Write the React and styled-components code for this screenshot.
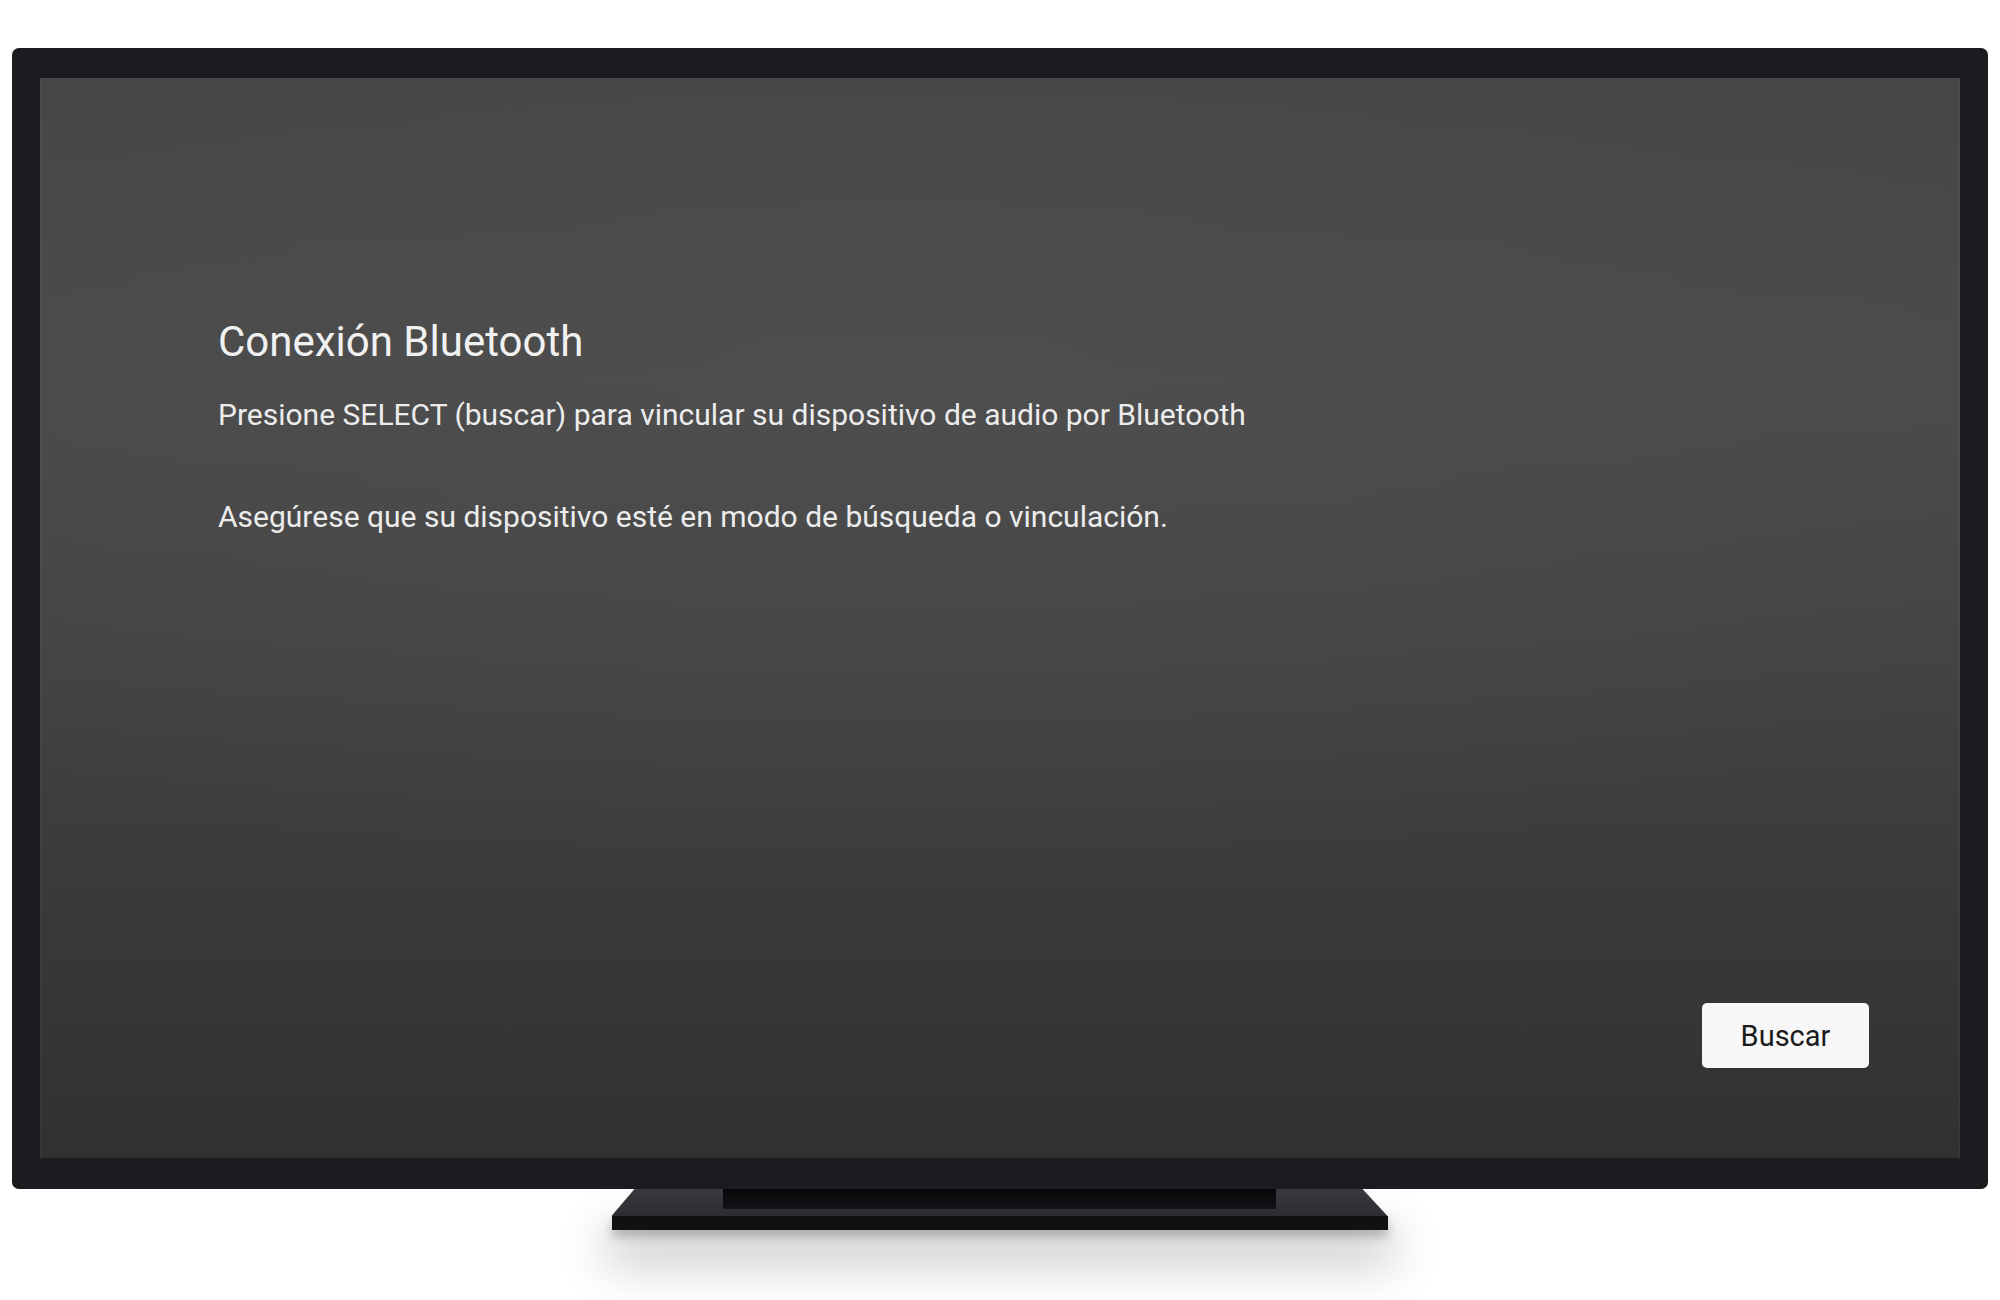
import React from "react";
import styled, { createGlobalStyle } from "styled-components";

const GlobalStyle = createGlobalStyle`
  html, body { margin: 0; padding: 0; background: #ffffff; }
  body { font-family: Roboto, "Noto Sans", "Liberation Sans", sans-serif; }
`;

const Page = styled.div`
  width: 2000px;
  height: 1300px;
  padding: 48px 12px 0 12px;
  box-sizing: border-box;
  display: flex;
  flex-direction: column;
  align-items: center;
  overflow: hidden;
`;

const Frame = styled.div`
  width: 1976px;
  height: 1141px;
  box-sizing: border-box;
  padding: 30px 28px 31px 28px;
  background: #1c1b20;
  border-radius: 7px;
  display: flex;
  position: relative;
  z-index: 1;
`;

const Screen = styled.div`
  width: 1920px;
  height: 1080px;
  box-sizing: border-box;
  padding: 240px 91px 90px 178px;
  display: flex;
  flex-direction: column;
  background:
    radial-gradient(ellipse 70% 45% at 45% 30%, rgba(80, 80, 80, 0.55), rgba(80, 80, 80, 0) 100%),
    linear-gradient(180deg, #464646 0%, #4b4b4b 28%, #444444 52%, #3a3a39 75%, #31312f 100%);
  box-shadow: inset 1px 0 0 rgba(255, 255, 255, 0.04), inset -1px 0 0 rgba(255, 255, 255, 0.04);
`;

const Content = styled.div`
  flex: 1;
  display: flex;
  flex-direction: column;
`;

const Title = styled.h1`
  margin: 0;
  font-family: Roboto, "Noto Sans", sans-serif;
  font-weight: 400;
  font-size: 42px;
  line-height: 48px;
  color: #f1f1f1;
  letter-spacing: 0;
`;

const Body = styled.p`
  margin: ${(p) => p.$gap}px 0 0 0;
  font-family: Roboto, "Noto Sans", sans-serif;
  font-weight: 400;
  font-size: 30px;
  line-height: 51px;
  color: #ececec;
`;

const Actions = styled.div`
  display: flex;
  justify-content: flex-end;
`;

const Button = styled.button`
  width: 167px;
  height: 65px;
  border: none;
  border-radius: 5px;
  background: #f7f7f7;
  color: #1b1b1b;
  font-family: Roboto, "Noto Sans", sans-serif;
  font-size: 29px;
  font-weight: 400;
  padding: 0;
  display: flex;
  align-items: center;
  justify-content: center;
  cursor: pointer;
`;

const Stand = styled.div`
  width: 776px;
  display: flex;
  flex-direction: column;
  margin-left: -1px;
`;

const Neck = styled.div`
  height: 27px;
  display: flex;
  justify-content: center;
  background: linear-gradient(180deg, #3a393f 0%, #2d2c31 100%);
  clip-path: polygon(23px 0, calc(100% - 25px) 0, 100% 100%, 0 100%);
  position: relative;
`;

const NeckInset = styled.div`
  width: 553px;
  height: 20px;
  background: linear-gradient(180deg, #060607 0%, #141317 100%);
`;

const Base = styled.div`
  height: 14px;
  background: #111113;
  box-shadow: 0 24px 48px 6px rgba(0, 0, 0, 0.3), 0 6px 12px rgba(0, 0, 0, 0.28);
`;

export default function App() {
  return (
    <>
      <GlobalStyle />
      <Page>
        <Frame>
          <Screen>
            <Content>
              <Title>Conexión Bluetooth</Title>
              <Body $gap={23}>
                Presione SELECT (buscar) para vincular su dispositivo de audio por Bluetooth
              </Body>
              <Body $gap={51}>
                Asegúrese que su dispositivo esté en modo de búsqueda o vinculación.
              </Body>
            </Content>
            <Actions>
              <Button>Buscar</Button>
            </Actions>
          </Screen>
        </Frame>
        <Stand>
          <Neck>
            <NeckInset />
          </Neck>
          <Base />
        </Stand>
      </Page>
    </>
  );
}
